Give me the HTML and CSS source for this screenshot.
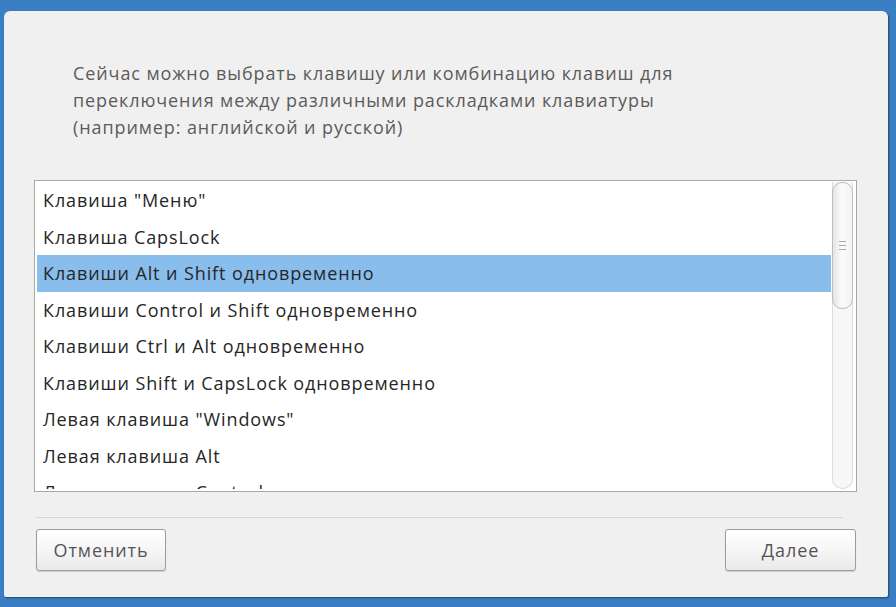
FILE: index.html
```html
<html>
<head>
    <meta content="text/html;charset=utf-8" http-equiv="Content-Type"/>
    <link rel="stylesheet" href="styles.css">
</head>
<body>
<div class="dialog">
    <p class="intro">Сейчас можно выбрать клавишу или комбинацию клавиш для<br>
    переключения между различными раскладками клавиатуры<br>
    (например: английской и русской)</p>

    <div class="listbox">
        <div class="rows">
            <div class="row">Клавиша "Меню"</div>
            <div class="row">Клавиша CapsLock</div>
            <div class="row selected">Клавиши Alt и Shift одновременно</div>
            <div class="row">Клавиши Control и Shift одновременно</div>
            <div class="row">Клавиши Ctrl и Alt одновременно</div>
            <div class="row">Клавиши Shift и CapsLock одновременно</div>
            <div class="row">Левая клавиша "Windows"</div>
            <div class="row">Левая клавиша Alt</div>
            <div class="row">Левая клавиша Control</div>
        </div>
        <div class="scrollbar">
            <div class="thumb">
                <span class="grip"></span>
                <span class="grip"></span>
                <span class="grip"></span>
            </div>
        </div>
    </div>

    <div class="separator"></div>

    <div class="buttons">
        <button class="btn">Отменить</button>
        <button class="btn next">Далее</button>
    </div>
</div>
</body>
</html>
```

FILE: styles.css
```css
body {
    margin: 0;
    height: 607px;
    overflow: hidden;
    background: #3a7ec3;
    font-family: "Open Sans", "DejaVu Sans", sans-serif;
}
.dialog {
    margin: 11px 8px 0 4px;
    height: 586px;
    box-sizing: border-box;
    padding: 49px 31px 26px 30px;
    background: #f0f0f0;
    border-radius: 6px 6px 2px 2px;
    box-shadow: 1px 1px 2px rgba(0, 0, 0, 0.45);
    display: flex;
    flex-direction: column;
}
.intro {
    margin: 0 0 39px 39px;
    font-size: 18px;
    letter-spacing: 0.9px;
    line-height: 27px;
    color: #5b5b5b;
}
.listbox {
    height: 312px;
    box-sizing: border-box;
    border: 1px solid #a8a8a8;
    background: #ffffff;
    padding: 1px 3px 2px 2px;
    display: flex;
}
.rows {
    flex: 1;
    margin-right: 1px;
    overflow: hidden;
}
.row {
    height: 36.5px;
    line-height: 36.5px;
    padding-left: 6px;
    font-size: 18px;
    letter-spacing: 0.9px;
    color: #262626;
    white-space: nowrap;
}
.row.selected {
    background: #88bdec;
}
.scrollbar {
    width: 21px;
    box-sizing: border-box;
    border: 1px solid #dcdcdc;
    border-top: none;
    border-radius: 0 0 10px 10px;
    background: #f7f7f7;
}
.thumb {
    height: 127px;
    margin: 0 -1px;
    box-sizing: border-box;
    border: 1px solid #bdbdbd;
    border-radius: 10px;
    background: linear-gradient(to right, #e4e4e4, #fbfbfb 45%, #f3f3f3);
    display: flex;
    flex-direction: column;
    align-items: center;
    justify-content: center;
    gap: 3px;
}
.grip {
    width: 7px;
    height: 1px;
    background: #a8a8a8;
}
.separator {
    height: 1px;
    margin: 25px 14px 0 2px;
    background: #d6d6d6;
}
.buttons {
    margin: 11px 1px 0 2px;
    display: flex;
    justify-content: space-between;
}
.btn {
    width: 130px;
    height: 42px;
    border: 1px solid #9c9c9c;
    border-radius: 3px;
    background: linear-gradient(to bottom, #ffffff, #f4f4f4 60%, #e8e8e8);
    box-shadow: 0 1px 1px rgba(0, 0, 0, 0.15);
    font-family: "Open Sans", "DejaVu Sans", sans-serif;
    font-size: 18px;
    letter-spacing: 0.9px;
    color: #555555;
}
.btn.next {
    width: 131px;
}
```
